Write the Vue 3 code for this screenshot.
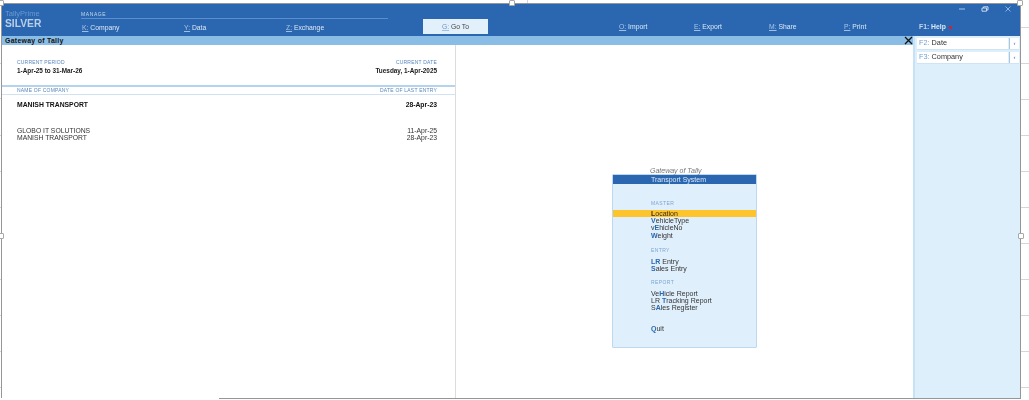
<template>
  <div class="page">
    <i v-for="y in gridYs" :key="y" class="grid-tick" :style="{ top: y + 'px' }"></i>
    <i v-for="y in leftTicks" :key="'l' + y" class="grid-tick left" :style="{ top: y + 'px' }"></i>
    <i class="top-tick"></i>
    <i v-for="(h, n) in handles" :key="n" class="handle" :style="{ left: h[0] + 'px', top: h[1] + 'px' }"></i>
    <i class="bottom-cover"></i>

    <div class="window">
      <header class="topbar">
        <div class="brand">
          <div class="brand-name">TallyPrime</div>
          <div class="brand-edition">SILVER</div>
        </div>
        <div class="manage">
          <div class="manage-label">MANAGE</div>
          <div class="manage-items">
            <div v-for="m in leftMenu" :key="m.key" class="nav-item"><u>{{ m.key }}:</u> {{ m.label }}</div>
          </div>
        </div>
        <div class="goto"><u>G:</u> Go To</div>
        <div class="right-nav">
          <div v-for="m in rightMenu" :key="m.key" class="nav-item"><u>{{ m.key }}:</u> {{ m.label }}</div>
          <div class="nav-item help"><span>F1:</span> Help <b class="dot"></b></div>
        </div>
        <div class="win-controls">
          <svg width="8" height="6" viewBox="0 0 8 6"><path d="M1 3h6" stroke="#a9c6e6" stroke-width="1" /></svg>
          <svg width="8" height="6" viewBox="0 0 8 6"><path d="M1 2h4.500v3.200H1zM2.500 2V.8H7V4H5.500" fill="none" stroke="#c4d9ef" stroke-width="1" /></svg>
          <svg width="8" height="6" viewBox="0 0 8 6"><path d="M1.500.5l5 5M6.500.5l-5 5" stroke="#a9c6e6" stroke-width=".8" /></svg>
        </div>
      </header>

      <div class="content">
        <div class="main">
          <div class="title-bar">
            <span>Gateway of Tally</span>
            <svg class="title-close" width="9" height="9" viewBox="0 0 9 9"><path d="M1 1l7 7M8 1L1 8" stroke="#111" stroke-width="1.300" /></svg>
          </div>
          <div class="panes">
            <section class="left-pane">
              <div class="period">
                <div>
                  <div class="caption">CURRENT PERIOD</div>
                  <div class="strong">1-Apr-25 to 31-Mar-26</div>
                </div>
                <div class="align-right">
                  <div class="caption">CURRENT DATE</div>
                  <div class="strong">Tuesday, 1-Apr-2025</div>
                </div>
              </div>
              <div class="company-head caption">
                <span>NAME OF COMPANY</span>
                <span>DATE OF LAST ENTRY</span>
              </div>
              <div class="company-row active">
                <span>MANISH TRANSPORT</span>
                <span>28-Apr-23</span>
              </div>
              <div class="company-list">
                <div v-for="c in companies" :key="c.name" class="company-row">
                  <span>{{ c.name }}</span>
                  <span>{{ c.date }}</span>
                </div>
              </div>
            </section>

            <section class="right-pane">
              <div class="menu-wrap">
                <div class="menu-title">Gateway of Tally</div>
                <div class="menu">
                  <div class="menu-head">Transport System</div>
                  <template v-for="g in groups" :key="g.title">
                    <div class="group-title" :class="g.cls">{{ g.title }}</div>
                    <div
                      v-for="item in g.items"
                      :key="item.join('')"
                      class="menu-item"
                      :class="{ selected: item[1] === 'L' }"
                    >{{ item[0] }}<em>{{ item[1] }}</em>{{ item[2] }}</div>
                  </template>
                  <div class="menu-item quit"><em>Q</em>uit</div>
                </div>
              </div>
            </section>
          </div>
        </div>

        <aside class="side">
          <div v-for="s in sideButtons" :key="s.key" class="side-row">
            <div class="side-btn"><span>{{ s.key }}:</span> {{ s.label }}</div>
            <div class="side-arrow">‹</div>
          </div>
        </aside>
      </div>
    </div>
  </div>
</template>

<script setup>
const gridYs = [27, 63, 99, 135, 171, 207, 243, 279, 315, 351, 387]
const leftTicks = [63, 98, 135, 171, 207, 279, 315, 351, 387]
const handles = [[-2, 0], [509, 0], [1017, 0], [-2, 233], [1018, 233]]

const leftMenu = [
  { key: 'K', label: 'Company' },
  { key: 'Y', label: 'Data' },
  { key: 'Z', label: 'Exchange' },
]
const rightMenu = [
  { key: 'O', label: 'Import' },
  { key: 'E', label: 'Export' },
  { key: 'M', label: 'Share' },
  { key: 'P', label: 'Print' },
]
const companies = [
  { name: 'GLOBO IT SOLUTIONS', date: '11-Apr-25' },
  { name: 'MANISH TRANSPORT', date: '28-Apr-23' },
]
const groups = [
  {
    title: 'MASTER',
    cls: 'g-master',
    items: [['', 'L', 'ocation'], ['', 'V', 'ehicleType'], ['v', 'E', 'hicleNo'], ['', 'W', 'eight']],
  },
  {
    title: 'ENTRY',
    cls: 'g-entry',
    items: [['', 'LR', ' Entry'], ['', 'S', 'ales Entry']],
  },
  {
    title: 'REPORT',
    cls: 'g-report',
    items: [['Ve', 'H', 'icle Report'], ['LR ', 'T', 'racking Report'], ['S', 'A', 'les Register']],
  },
]
const sideButtons = [
  { key: 'F2', label: 'Date' },
  { key: 'F3', label: 'Company' },
]
</script>

<style>
html, body { margin: 0; background: #fff; overflow: hidden; }
</style>

<style scoped>
.page { position: relative; width: 1029px; height: 400px; overflow: hidden; background: #fff; font-family: "Liberation Sans", Arial, sans-serif; color: #2b2b2b; }

/* excel sheet behind the screenshot */
.grid-tick { position: absolute; left: 1021px; width: 8px; height: 1px; background: #d6d6d6; }
.grid-tick.left { left: 0; width: 1px; }
.top-tick { position: absolute; left: 527px; top: 0; width: 1px; height: 3px; background: #d6d6d6; }
.handle { position: absolute; z-index: 3; width: 6px; height: 6px; box-sizing: border-box; background: #fff; border: 1px solid #a8a8a8; border-radius: 1px; }
.bottom-cover { position: absolute; z-index: 2; left: 0; top: 398px; width: 219px; height: 2px; background: #fff; }

.window { box-sizing: border-box; width: 1020px; height: 396px; margin: 3px 0 0 1px; border: 1px solid #969696; display: flex; flex-direction: column; }

.topbar { position: relative; flex: none; height: 32px; background: #2a67b0; color: #dbe8f6; display: flex; font-size: 6.800px; filter: blur(.4px); }
.brand { width: 79px; padding: 6px 0 0 3px; box-sizing: border-box; }
.brand-name { color: #6a9ad0; font-size: 7.500px; line-height: 8px; }
.brand-edition { color: #b9cfe6; font-size: 10.300px; font-weight: 700; line-height: 10px; margin-top: 1px; }

.manage { width: 307px; }
.manage-label { font-size: 5px; letter-spacing: .6px; color: #c6d8ec; padding-top: 7px; line-height: 6px; height: 6px; border-bottom: 1px solid #5a8fcc; padding-bottom: 1px; }
.manage-items { display: flex; margin-top: 5px; padding-left: 1px; }
.manage-items .nav-item { width: 102.500px; }

.nav-item { line-height: 8px; white-space: nowrap; }
u { text-decoration: underline; text-decoration-color: #9fc0e4; text-underline-offset: 1px; color: #a9c6e6; }

.goto { width: 65px; height: 15px; margin: 15px 0 0 35px; background: #e2f0fc; color: #444; text-align: center; line-height: 15px; }
.goto u { color: #6a94c6; }

.right-nav { display: flex; margin: 19px 0 0 131px; }
.right-nav .nav-item { width: 75px; }
.help { font-weight: 700; }
.help span { color: #c6d8ec; }
.dot { display: inline-block; width: 3px; height: 3px; border-radius: 50%; background: #f01428; margin-left: 1px; }

.win-controls { position: absolute; top: 2px; right: 8px; display: flex; gap: 15px; }

.content { flex: 1; display: flex; min-height: 0; filter: blur(.4px); }
.main { width: 911px; display: flex; flex-direction: column; }
.title-bar { flex: none; height: 9px; background: #8abde6; display: flex; justify-content: space-between; align-items: center; padding: 0 0 1px 3px; box-sizing: border-box; font-size: 6.900px; font-weight: 700; color: #111; letter-spacing: .3px; }
.title-close { margin: 1px 0 0; }

.panes { flex: 1; display: flex; }
.left-pane { width: 453px; border-right: 1px solid #dcdcdc; font-size: 6.800px; }
.right-pane { flex: 1; position: relative; display: flex; }

.caption { font-size: 5px; color: #5a86bd; letter-spacing: .2px; line-height: 6px; }
.strong { font-weight: 700; font-size: 6.400px; color: #1a1a1a; line-height: 8px; margin-top: 2px; }
.align-right { text-align: right; }

.period { display: flex; justify-content: space-between; padding: 14px 18px 0 15px; height: 26px; }
.company-head { display: flex; justify-content: space-between; padding: 0 18px 0 15px; height: 7px; border-top: 2px solid #b3d3ee; border-bottom: 1px solid #cfe3f5; }
.company-row { display: flex; justify-content: space-between; padding: 0 18px 0 15px; line-height: 7px; color: #333; }
.company-row.active { margin-top: 6px; font-weight: 700; color: #111; line-height: 8px; }
.company-list { margin-top: 17.500px; }

.menu-wrap { margin: 122px 0 0 156px; width: 145px; }
.menu-title { font-size: 7px; font-style: italic; color: #777; line-height: 7px; padding-left: 38px; height: 7px; }
.menu { box-sizing: border-box; height: 174px; background: #e0effc; border: 1px solid #bcd9f1; border-radius: 1px; }
.menu-head { height: 9px; background: #2a67b0; color: #dbe8f6; font-size: 7px; line-height: 9px; padding-left: 38px; }
.group-title { font-size: 5px; color: #7ba6d3; padding-left: 38px; line-height: 6px; letter-spacing: .4px; }
.g-master { margin-top: 16px; margin-bottom: 3.700px; }
.g-entry { margin-top: 8px; margin-bottom: 4.800px; }
.g-report { margin-top: 6.500px; margin-bottom: 5px; }
.menu-item { font-size: 7px; line-height: 7.300px; height: 7.300px; padding-left: 38px; color: #333; white-space: pre; }
.menu-item em { font-style: normal; color: #2a67b0; font-weight: 700; }
.menu-item.selected { background: #fdc42c; color: #3a2c10; }
.menu-item.selected em { color: #3a2c10; }
.quit { margin-top: 13.500px; }

.side { flex: 1; box-sizing: border-box; background: #deeffc; border-left: 2px solid #c8e2f5; padding-top: 2px; }
.side-row { display: flex; height: 11px; margin: 0 1px 2px 2px; border-bottom: 1px solid #cfe3f5; gap: 1px; }
.side-btn { width: 89px; background: #fff; font-size: 7.300px; line-height: 10px; padding-left: 2px; color: #333; }
.side-btn span { color: #6f9fd2; }
.side-arrow { flex: 1; background: #fff; border-left: 1px solid #aac6e0; color: #2a67b0; font-size: 6px; line-height: 10px; text-align: center; }
</style>
